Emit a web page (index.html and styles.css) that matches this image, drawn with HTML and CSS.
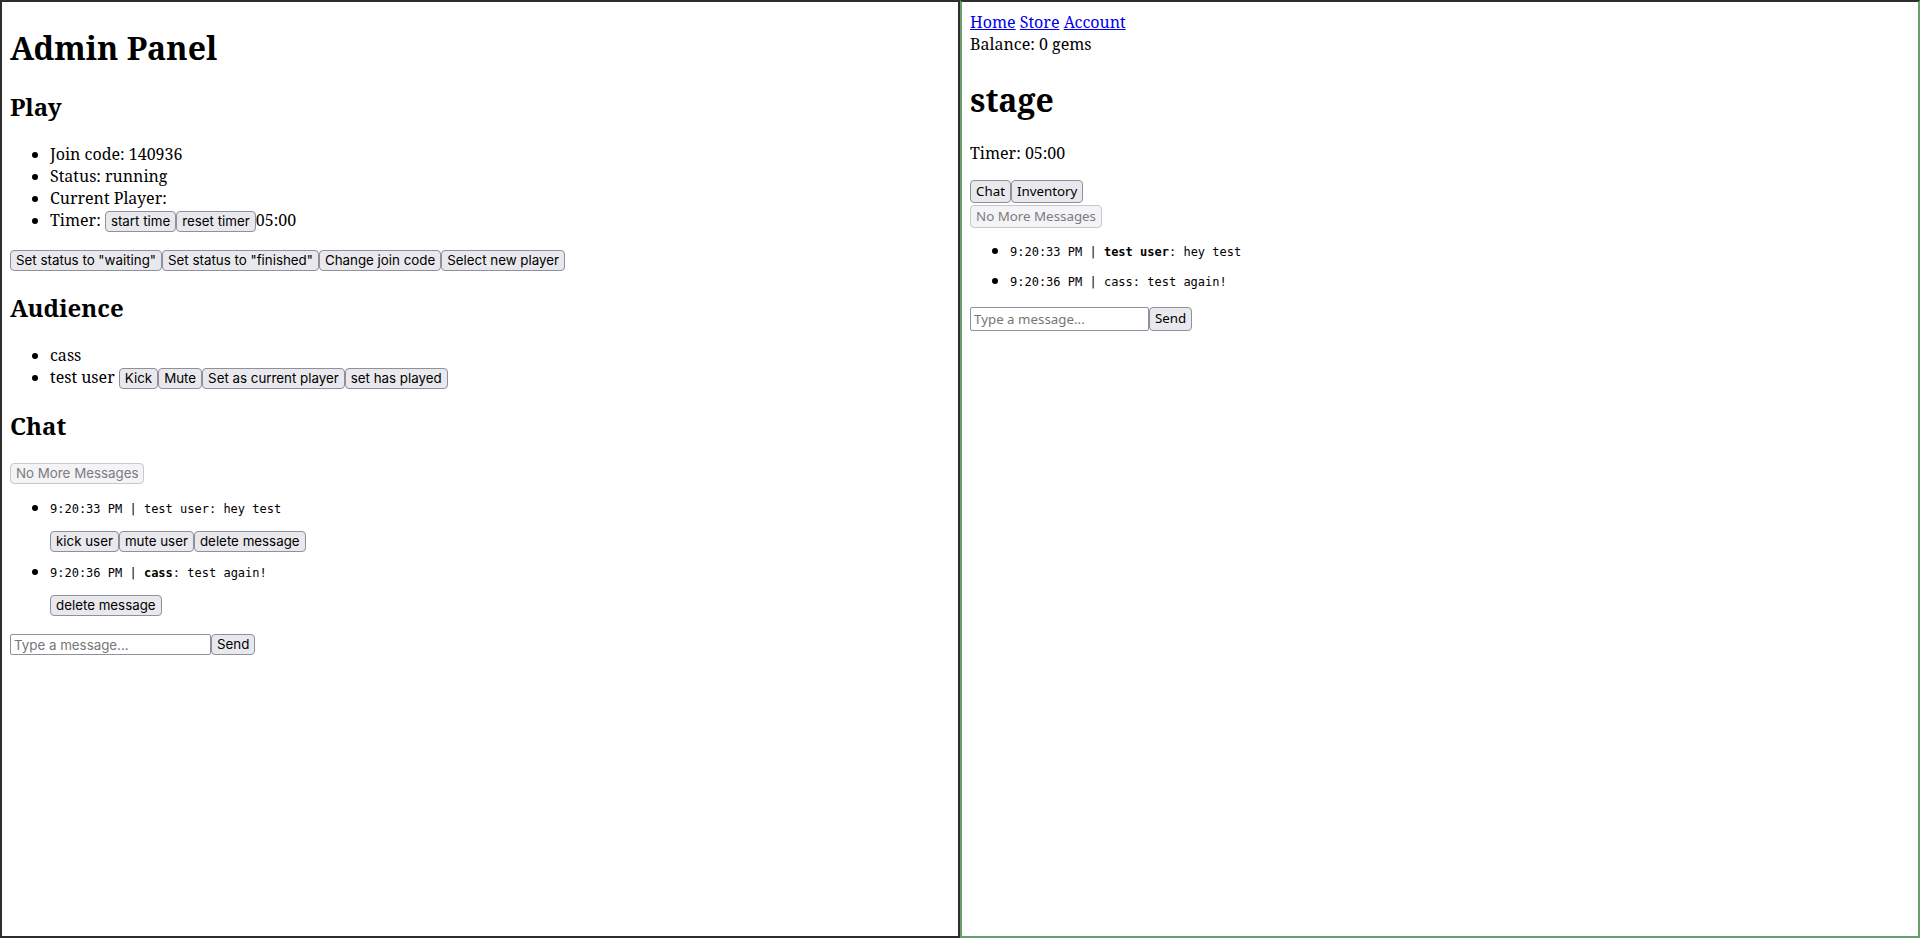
FILE: index.html
```html
<!DOCTYPE html>
<html lang="en">
<head>
<meta charset="utf-8">
<title>Admin Panel / Stage</title>
<link rel="stylesheet" href="styles.css">
</head>
<body>
<div class="frames">
  <div class="frame frame-admin">
    <h1 class="title">Admin Panel</h1>
    <h2 class="section">Play</h2>
    <ul class="list">
      <li>Join code: 140936</li>
      <li>Status: running</li>
      <li>Current Player:</li>
      <li>Timer: <button class="btn">start time</button><button class="btn">reset timer</button>05:00</li>
    </ul>
    <div class="btn-row"><button class="btn">Set status to "waiting"</button><button class="btn">Set status to "finished"</button><button class="btn">Change join code</button><button class="btn">Select new player</button></div>
    <h2 class="section">Audience</h2>
    <ul class="list">
      <li>cass</li>
      <li>test user <button class="btn">Kick</button><button class="btn">Mute</button><button class="btn">Set as current player</button><button class="btn">set has played</button></li>
    </ul>
    <h2 class="section">Chat</h2>
    <div class="more"><button class="btn" disabled>No More Messages</button></div>
    <ul class="chat">
      <li class="chat-item">
        <div class="msg">9:20:33 PM | test user: hey test</div>
        <div class="actions"><button class="btn">kick user</button><button class="btn">mute user</button><button class="btn">delete message</button></div>
      </li>
      <li class="chat-item">
        <div class="msg">9:20:36 PM | <b>cass</b>: test again!</div>
        <div class="actions"><button class="btn">delete message</button></div>
      </li>
    </ul>
    <form class="composer"><input class="input" type="text" placeholder="Type a message..."><button class="btn" type="button">Send</button></form>
  </div>
  <div class="frame frame-stage">
    <nav class="nav"><a href="#">Home</a> <a href="#">Store</a> <a href="#">Account</a></nav>
    <div class="balance">Balance: 0 gems</div>
    <h1 class="title">stage</h1>
    <p class="timer">Timer: 05:00</p>
    <div class="tabs"><button class="btn">Chat</button><button class="btn">Inventory</button></div>
    <div class="more"><button class="btn" disabled>No More Messages</button></div>
    <ul class="chat">
      <li class="chat-item"><div class="msg">9:20:33 PM | <b>test user</b>: hey test</div></li>
      <li class="chat-item"><div class="msg">9:20:36 PM | cass: test again!</div></li>
    </ul>
    <form class="composer"><input class="input" type="text" placeholder="Type a message..."><button class="btn" type="button">Send</button></form>
  </div>
</div>
</body>
</html>
```
FILE: styles.css
```css
html, body {
  margin: 0;
  padding: 0;
  background: #ffffff;
}

.frames {
  display: flex;
  height: 938px;
}

.frame {
  width: 960px;
  height: 938px;
  box-sizing: border-box;
  border: 2px solid #2d2d2d;
  padding: 0 8px;
  font-family: "Noto Serif", "DejaVu Serif", serif;
  font-size: 16px;
  color: #000;
  overflow: hidden;
}

.frame-stage {
  border-color: #2d2d2d #6b9c6b #6b9c6b #6b9c6b;
  padding-top: 9px;
}

.title {
  font-size: 32px;
  font-weight: bold;
  margin: 21.44px 0;
}

.frame-admin .title {
  margin-top: 24px;
}

.frame-stage .title {
  margin-top: 22.5px;
}

.section {
  font-size: 24px;
  font-weight: bold;
  margin: 19.92px 0;
}

.list,
.chat {
  margin: 16px 0;
  padding-left: 40px;
}

.timer {
  margin: 16px 0;
}

.nav a {
  color: #0000ee;
  text-decoration: underline;
}

.btn {
  font-family: Inter, "Noto Sans", sans-serif;
  font-size: 13.33px;
  line-height: 17px;
  background: #e9e9ed;
  color: #000;
  border: 1px solid #8f8f9d;
  border-radius: 4px;
  padding: 1px 5px;
  margin: 0;
}

.btn:disabled {
  background: #f4f4f6;
  color: #7b7b80;
  border-color: #c8c8ce;
}

.frame-stage .btn {
  font-family: "Noto Sans", "Open Sans", sans-serif;
  line-height: 19px;
}

.more,
.tabs,
.actions {
  display: flex;
}

.frame-admin .more {
  margin-top: 21px;
}

.tabs {
  margin-bottom: 2px;
}

.chat-item {
  font-size: 16px;
  line-height: 0;
  margin: 13px 0;
}

.msg {
  font-family: "DejaVu Sans Mono", monospace;
  font-size: 12px;
  line-height: 17px;
}

.actions {
  margin-top: 13px;
}

.frame-admin .chat {
  margin-top: 17px;
  margin-bottom: 18px;
}

.composer {
  display: flex;
  margin: 0;
}

.input {
  font-family: Inter, "Noto Sans", sans-serif;
  font-size: 13.33px;
  width: 201px;
  height: 21px;
  box-sizing: border-box;
  border: 1px solid #8f8f9d;
  border-radius: 2px;
  padding: 1px 3px;
  margin: 0;
}

.input::placeholder {
  color: #767676;
}

.frame-stage .input {
  font-family: "Noto Sans", "Open Sans", sans-serif;
  width: 179px;
  height: 24px;
}
```
